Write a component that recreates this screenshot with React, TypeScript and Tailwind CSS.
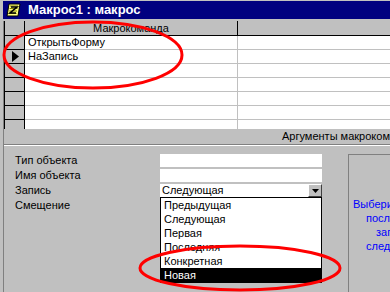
import React from "react";

const rows = ["ОткрытьФорму", "НаЗапись", "", "", "", "", ""];
const items = ["Предыдущая", "Следующая", "Первая", "Последняя", "Конкретная", "Новая"];

function MacroIcon() {
  return (
    <svg width="16" height="16" viewBox="0 0 16 16" className="shrink-0">
      <path d="M3 2 H14 L12 14 H1 Z" fill="#ffff80" stroke="#000" strokeWidth="1" />
      <path d="M4 4 H12 M3.6 6.5 H11.5 M3.2 9 H11 M2.8 11.5 H10.5" stroke="#808000" strokeWidth="1" />
      <path d="M5 5 L11 5 L4 11 L10 11" stroke="#000" strokeWidth="1.6" fill="none" />
    </svg>
  );
}

export default function App() {
  return (
    <div className="relative w-[390px] h-[292px] overflow-hidden bg-[#c0c0c0] font-['Liberation_Sans',Arial,sans-serif] text-[11px] text-black flex flex-col">
      {/* title bar */}
      <div className="ml-[3px] mt-[1px] h-[18px] shrink-0 bg-[#000080] flex items-center pl-[3px] gap-[6px]">
        <MacroIcon />
        <span className="text-white font-bold text-[13px] leading-[18px] whitespace-nowrap">Макрос1 : макрос</span>
      </div>

      {/* body */}
      <div className="ml-[3px] mt-[2px] flex-1 flex flex-col border-l border-[#808080] min-h-0">
        {/* grid */}
        <div className="h-[108px] shrink-0 overflow-hidden border-l border-black flex flex-col">
          <div className="flex h-[15px] shrink-0 border-b border-black">
            <div className="w-[20px] shrink-0 border-r border-black bg-[#c0c0c0]" />
            <div className="w-[213px] shrink-0 border-r border-black bg-[#c0c0c0] text-center leading-[14px] whitespace-nowrap">
              Макрокоманда
            </div>
            <div className="flex-1 bg-[#c0c0c0]" />
          </div>
          {rows.map((r, i) => (
            <div key={i} className="flex h-[14px] shrink-0">
              <div className="w-[20px] shrink-0 border-r border-b border-black bg-[#c0c0c0] flex items-center pl-[7px]">
                {i === 1 && (
                  <svg width="7" height="11" viewBox="0 0 7 11">
                    <path d="M0 0 L7 5.5 L0 11 Z" fill="#000" />
                  </svg>
                )}
              </div>
              <div className="w-[213px] shrink-0 border-r border-b border-[#c0c0c0] bg-white pl-[3px] leading-[13px] whitespace-nowrap">
                {r}
              </div>
              <div className="flex-1 border-b border-[#c0c0c0] bg-white" />
            </div>
          ))}
        </div>

        {/* arguments band */}
        <div className="h-[15px] shrink-0 pl-[278px] leading-[15px] whitespace-nowrap overflow-hidden">
          Аргументы макрокоманды
        </div>
        <div className="h-[2px] shrink-0 border-t border-[#808080] border-b border-b-white" />

        {/* form */}
        <div className="flex-1 flex pt-[8px] min-h-0">
          <div className="w-[156px] shrink-0 pl-[11px] flex flex-col">
            {["Тип объекта", "Имя объекта", "Запись", "Смещение"].map((l) => (
              <div key={l} className="h-[15px] leading-[13px] whitespace-nowrap">
                {l}
              </div>
            ))}
          </div>
          <div className="w-[162px] shrink-0 flex flex-col">
            <div className="h-[13px] bg-white" />
            <div className="h-[13px] mt-[2px] bg-white" />
            <div className="relative h-[13px] mt-[2px] bg-white flex">
              <div className="flex-1 pl-[2px] leading-[13px]">Следующая</div>
              <div className="w-[14px] h-[13px] bg-[#c0c0c0] border-t border-l border-white border-r border-b border-r-[#404040] border-b-[#404040] flex items-center justify-center">
                <svg width="7" height="4" viewBox="0 0 7 4">
                  <path d="M0 0 H7 L3.5 4 Z" fill="#000" />
                </svg>
              </div>
              <div className="absolute left-0 top-full w-[162px] h-[86px] border border-black bg-white flex flex-col">
                {items.map((it) => (
                  <div
                    key={it}
                    className={
                      it === "Новая"
                        ? "h-[14px] leading-[14px] pl-[3px] bg-black text-white whitespace-nowrap"
                        : "h-[14px] leading-[14px] pl-[3px] whitespace-nowrap"
                    }
                  >
                    {it}
                  </div>
                ))}
              </div>
            </div>
          </div>
          <div className="ml-[26px] flex-1 border-t border-l border-[#808080] overflow-hidden pt-[42px] text-[#0000ff] leading-[14px] whitespace-nowrap">
            <div className="pl-[4px]">Выберите запись,</div>
            <div className="pl-[17px]">последнюю или</div>
            <div className="pl-[27px]">запись</div>
            <div className="pl-[17px]">следующую</div>
          </div>
        </div>
      </div>

      {/* annotations */}
      <svg className="absolute left-0 top-0 pointer-events-none" width="390" height="292" viewBox="0 0 390 292">
        <ellipse cx="93" cy="55" rx="89" ry="33" fill="none" stroke="#ff0000" strokeWidth="3" />
        <ellipse cx="240" cy="268" rx="100" ry="22" fill="none" stroke="#ff0000" strokeWidth="3" />
      </svg>
    </div>
  );
}
